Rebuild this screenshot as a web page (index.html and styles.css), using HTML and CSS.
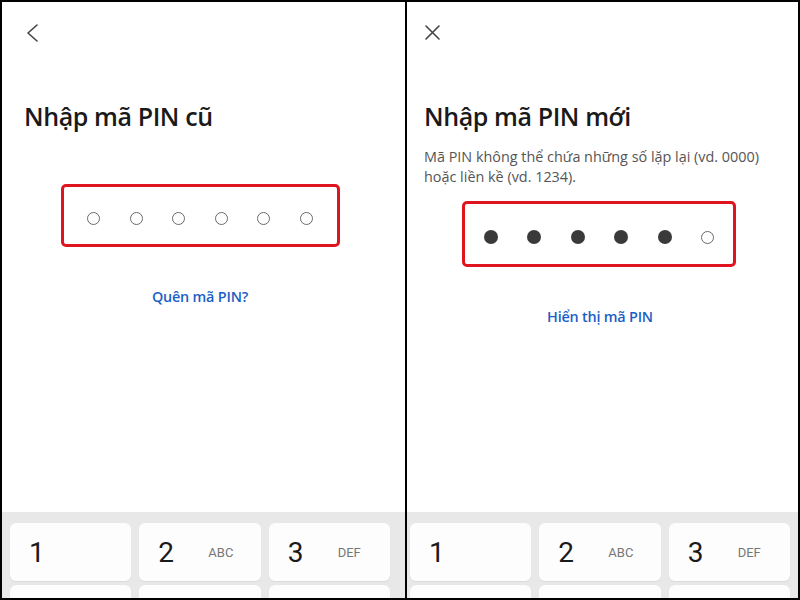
FILE: index.html
```html
<!DOCTYPE html>
<html lang="vi">
<head>
  <meta charset="UTF-8" />
  <title>Đổi mã PIN</title>
  <link rel="stylesheet" href="styles.css">
</head>
<body>
  <div class="frame">

    <!-- Step 1: old PIN -->
    <section class="screen">
      <div class="topbar">
        <svg class="icon" width="18" height="18" viewBox="0 0 18 18">
          <polyline points="13,1 4,9 13,17" />
        </svg>
      </div>
      <h1 class="title">Nhập mã PIN cũ</h1>
      <div class="pin-box">
        <span class="dot"></span>
        <span class="dot"></span>
        <span class="dot"></span>
        <span class="dot"></span>
        <span class="dot"></span>
        <span class="dot"></span>
      </div>
      <a class="link">Quên mã PIN?</a>

      <div class="keypad">
        <div class="key"><span class="num">1</span></div>
        <div class="key"><span class="num">2</span><span class="letters">ABC</span></div>
        <div class="key"><span class="num">3</span><span class="letters">DEF</span></div>
        <div class="key"></div>
        <div class="key"></div>
        <div class="key"></div>
      </div>
    </section>

    <!-- Step 2: new PIN -->
    <section class="screen">
      <div class="topbar">
        <svg class="icon" width="18" height="18" viewBox="0 0 18 18">
          <path d="M2 2 L15 15 M15 2 L2 15" />
        </svg>
      </div>
      <h1 class="title">Nhập mã PIN mới</h1>
      <p class="hint">Mã PIN không thể chứa những số lặp lại (vd. 0000) hoặc liền kề (vd. 1234).</p>
      <div class="pin-box pin-box--tall">
        <span class="dot filled"></span>
        <span class="dot filled"></span>
        <span class="dot filled"></span>
        <span class="dot filled"></span>
        <span class="dot filled"></span>
        <span class="dot"></span>
      </div>
      <a class="link">Hiển thị mã PIN</a>

      <div class="keypad">
        <div class="key"><span class="num">1</span></div>
        <div class="key"><span class="num">2</span><span class="letters">ABC</span></div>
        <div class="key"><span class="num">3</span><span class="letters">DEF</span></div>
        <div class="key"></div>
        <div class="key"></div>
        <div class="key"></div>
      </div>
    </section>

  </div>
</body>
</html>
```

FILE: styles.css
```css
body {
  margin: 0;
  background: #fff;
  font-family: 'Open Sans', 'Noto Sans', sans-serif;
  color: #1a1a1a;
}

.frame {
  position: relative;
  width: 800px;
  height: 600px;
  display: grid;
  grid-template-columns: 400px 400px;
  overflow: hidden;
}

/* outer frame line */
.frame::after {
  content: "";
  position: absolute;
  inset: 0;
  border: 2px solid #000;
  pointer-events: none;
}

/* divider between the two screens */
.frame::before {
  content: "";
  position: absolute;
  top: 0;
  bottom: 0;
  left: 405px;
  width: 2px;
  background: #000;
  z-index: 1;
}

.screen {
  height: 600px;
  display: flex;
  flex-direction: column;
  background: #fff;
}

.topbar {
  height: 100px;
  box-sizing: border-box;
  padding: 24px 0 0 24px;
}

.icon {
  display: block;
  fill: none;
  stroke: #444;
  stroke-width: 1.6;
  stroke-linecap: round;
  stroke-linejoin: round;
}

.title {
  margin: 0;
  padding: 0 24px;
  font-size: 25px;
  line-height: 32px;
  font-weight: 600;
  letter-spacing: -0.4px;
}

.hint {
  margin: 15px 0 0;
  padding: 0 24px;
  font-size: 14.4px;
  line-height: 20px;
  color: #555;
}

.pin-box {
  width: 279px;
  height: 63px;
  box-sizing: border-box;
  margin: 52px auto 0;
  padding-top: 6px;
  border: 3px solid #e0141e;
  border-radius: 5px;
  display: flex;
  align-items: center;
  justify-content: center;
  gap: 29.6px;
}

.pin-box--tall {
  width: 274px;
  height: 66px;
  margin-top: 14px;
  transform: translateX(-1px);
}

.dot {
  width: 13px;
  height: 13px;
  box-sizing: border-box;
  border: 1.3px solid #6a6a6a;
  border-radius: 50%;
}

.dot.filled {
  width: 14px;
  height: 14px;
  border: none;
  background: #3a3a3a;
}

.link {
  margin-top: 40px;
  text-align: center;
  font-size: 14.4px;
  line-height: 20px;
  font-weight: 600;
  letter-spacing: -0.2px;
  color: #1b5fc6;
}

.keypad {
  margin-top: auto;
  height: 88px;
  box-sizing: border-box;
  padding: 11px 10px 0;
  background: #e8e8e8;
  display: grid;
  grid-template-columns: repeat(3, 1fr);
  grid-auto-rows: 58px;
  gap: 4px 8px;
  overflow: hidden;
}

.key {
  display: flex;
  align-items: center;
  padding-left: 19px;
  background: #fdfdfd;
  border-radius: 6px;
  box-shadow: 0 1px 1px rgba(0, 0, 0, 0.06);
  font-family: Roboto, sans-serif;
}

.num {
  width: 50px;
  font-size: 28px;
  color: #1a1a1a;
}

.letters {
  font-size: 13px;
  color: #777;
}
```
